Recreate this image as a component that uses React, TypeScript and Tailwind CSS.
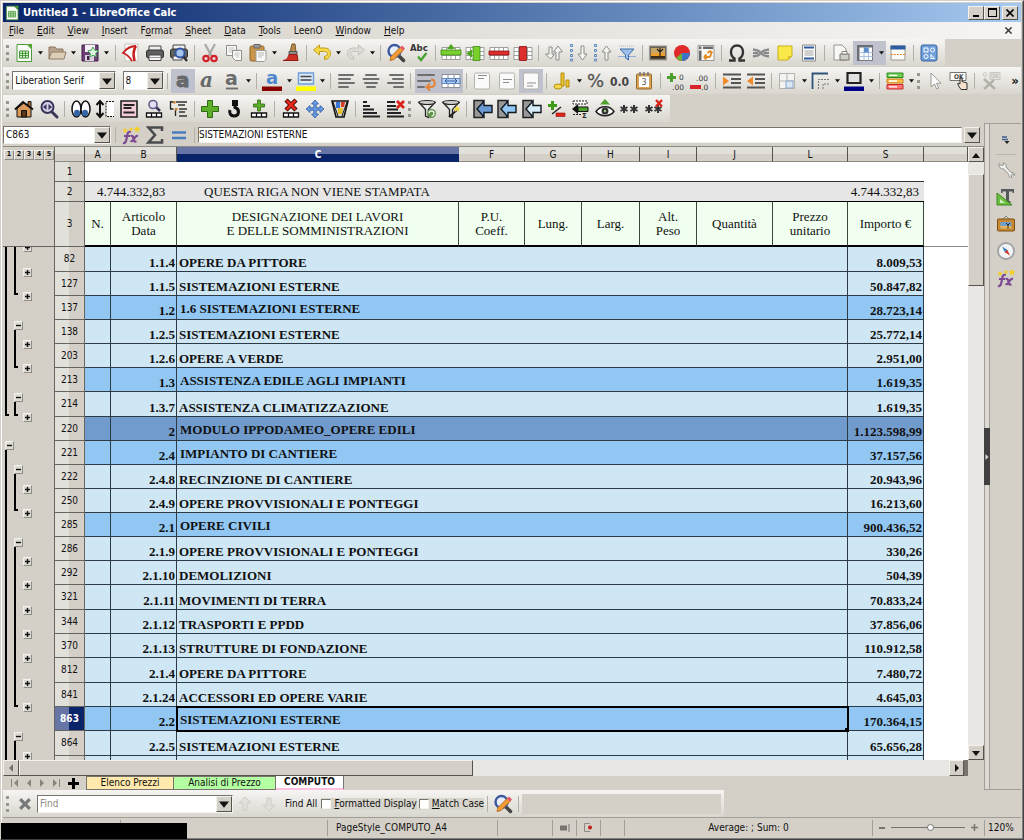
import { useState, type ReactNode } from 'react';
import clsx from 'clsx';

const bevel = 'bg-[#d4d0c8] border border-t-[#f4f2ee] border-l-[#f4f2ee] border-r-[#55534e] border-b-[#55534e]';
const sunken = 'border border-t-[#77746e] border-l-[#77746e] border-r-[#f4f2ee] border-b-[#f4f2ee]';

/* ---------- Icons (20 x 20 grid) ---------- */

const sheetRows = <path d="M1 4.5h18v12H1zM1 8.5h18M1 12.5h18M5.5 4.5v12M10 4.5v12M14.500 4.500v12" fill="#fff" stroke="#8a8a8a" strokeWidth=".8" />;
const gridStrip = <path d="M2.500 14h15v4h-15zM7.500 14v4M12.500 14v4" fill="#fff" stroke="#111" strokeWidth="1.300" />;
const redX = (
    <>
        <path d="M5 1l10 10M15 1L5 11" stroke="#3a0800" strokeWidth="4.500" />
        <path d="M5.500 1.500l9 9M14.500 1.500l-9 9" stroke="#e8261a" strokeWidth="2.600" />
    </>
);
const magnifier = (
    <>
        <path d="M12.500 12.500l5 5" stroke="#444" strokeWidth="3.500" strokeLinecap="round" />
        <circle cx="8.500" cy="8" r="6" fill="#e6ecf8" stroke="#3d5aa0" strokeWidth="2.400" />
    </>
);
const funnel = (
    <>
        <path d="M2 3.500l6.500 7v6.500l3 1.500v-8l6.500-7z" fill="#e8e8e4" stroke="#222" strokeWidth="1.300" />
        <ellipse cx="10" cy="3.500" rx="8" ry="2" fill="#cfcfca" stroke="#222" strokeWidth="1.200" />
    </>
);
const page = (y: number) => (
    <>
        <rect x="2.500" y="2" width="15" height="16" rx="1.500" fill="#fafafa" stroke="#b4b2ac" />
        <path d={`M6 ${y}h9M6 ${y + 3}h6`} stroke="#8f8f8f" />
    </>
);
const collapse = (fill: string) => (
    <>
        <path d="M1 1.500h9v17H1z" fill="#999" stroke="#222" strokeWidth="1.500" />
        <path d="M4 10l7-8v4.500h8v7h-8V18z" fill={fill} stroke="#101820" strokeWidth="1.400" />
    </>
);
const asterisk = (x: number) => (
    <path d={`M${x} 6v8M${x - 3.5} 8l7 4M${x + 3.5} 8l-7 4`} stroke="#333" strokeWidth="2" />
);
const lines = (d: string) => <path d={d} stroke="#6f6f6f" strokeWidth="2" strokeLinecap="round" />;

const icons: Record<string, ReactNode> = {
    new: (
        <>
            <path d="M3 1.500h10l4.500 4.500v12.500H3z" fill="#fcfdfb" stroke="#4c9a3a" />
            <path d="M13 1h5v5z" fill="#4ea62f" />
            <path d="M5.500 8h9v7h-9zM5.500 10.300h9M5.500 12.600h9M8.500 8v7M11.500 8v7" fill="#eaf7e4" stroke="#3f9432" />
        </>
    ),
    open: (
        <>
            <path d="M2 16V4h6l1.500 2H16v4" fill="#b8a48c" stroke="#8a7760" />
            <path d="M2 16l2.500-7H19l-2 7z" fill="#dccdb6" stroke="#8f7c64" />
        </>
    ),
    save: (
        <>
            <path d="M2 2h16v16H2z" fill="#6d3f75" stroke="#41204a" />
            <path d="M5 2h10v7H5z" fill="#f4f0f5" />
            <path d="M5 12h9v6H5z" fill="#d8d0da" />
            <path d="M7 13h2.500v4H7z" fill="#41204a" />
            <path d="M13 4l1.700 3.200 3.600.600-2.600 2.500.600 3.500-3.300-1.600-3.200 1.600.600-3.500L7.800 7.800l3.500-.6z" fill="#dff5df" stroke="#46a35c" />
        </>
    ),
    pdf: (
        <>
            <path d="M4 1h13v17H4z" fill="#fbfbfb" stroke="#c5c3be" />
            <path d="M15 3C10 3 5 6 2 10c3 1 6 3 9 8" fill="none" stroke="#c81c1c" strokeWidth="1.800" />
            <path d="M15 3c-3 4-3 9-1.500 15" fill="none" stroke="#c81c1c" strokeWidth="2.600" />
        </>
    ),
    print: (
        <>
            <path d="M4 3h12v5H4z" fill="#eee" stroke="#444" />
            <rect x="1.500" y="7" width="17" height="8" rx="2" fill="#5e605d" stroke="#2f302e" />
            <path d="M4 12h12v5.500H4z" fill="#f6f6f6" stroke="#444" />
            <path d="M5 14.500h10" stroke="#999" />
        </>
    ),
    preview: (
        <>
            <path d="M4 2h12v5H4z" fill="#eee" stroke="#444" />
            <rect x="1.500" y="6" width="17" height="9" rx="2" fill="#5e605d" stroke="#2f302e" />
            <path d="M4 13h9v4H4z" fill="#f6f6f6" stroke="#444" />
            <path d="M14 13l4 5" stroke="#333" strokeWidth="2.500" />
            <circle cx="11" cy="10" r="4.500" fill="#a8c4ea" stroke="#2f53a5" strokeWidth="1.800" />
        </>
    ),
    cut: (
        <>
            <path d="M5 1l6.500 12M15 1L8.500 13" stroke="#a9aaa8" strokeWidth="2.200" />
            <circle cx="6" cy="15.500" r="2.700" fill="none" stroke="#d2222a" strokeWidth="2.200" />
            <circle cx="14" cy="15.500" r="2.700" fill="none" stroke="#d2222a" strokeWidth="2.200" />
        </>
    ),
    copy: (
        <>
            <path d="M2.500 2.500h10v10h-10z" fill="#fafafa" stroke="#8e8e8a" />
            <path d="M4.500 5h6M4.500 7h6M4.500 9h4" stroke="#c2c2c0" />
            <path d="M8.500 7.500h9v10h-6l-3-3z" fill="#fafafa" stroke="#8e8e8a" />
            <path d="M10.500 10h5M10.500 12h5M12 14h3" stroke="#c2c2c0" />
        </>
    ),
    paste: (
        <>
            <rect x="2" y="3" width="14" height="15" rx="1.500" fill="#c9954a" stroke="#8d6325" />
            <path d="M6 1.500h6V5H6z" fill="#9c9c98" stroke="#666" />
            <path d="M8 7.500h10v9l-2 2H8z" fill="#fafafa" stroke="#9a9a96" />
            <path d="M10 10h6M10 12h6M10 14h4" stroke="#b8b8b6" />
        </>
    ),
    brush: (
        <>
            <path d="M11 1h3l1 8H9z" fill="#b98a4e" stroke="#7b5727" />
            <path d="M8 8.500h8v3H8z" fill="#8a8c89" stroke="#555" />
            <path d="M8 11.500h8l1 6H2c4-.5 5-3 6-6z" fill="#cf2f22" stroke="#8d1d14" />
        </>
    ),
    undo: <path d="M1.500 7l6-5v3h5c4 0 6 2.500 6 5.500s-2 5.500-6 6v-3.300c2 0 3-1 3-2.500s-1.200-2.200-3-2.200h-5v3.500z" fill="#f4d94a" stroke="#c09b15" />,
    redo: <path d="M18.500 7l-6-5v3h-5c-4 0-6 2.500-6 5.500s2 5.500 6 6v-3.300c-2 0-3-1-3-2.500s1.200-2.200 3-2.200h5v3.500z" fill="#dedcd6" stroke="#c4c1ba" />,
    findReplace: (
        <>
            {magnifier}
            <path d="M4 17.500l1-4L14.500 4l3 3L8 16.500z" fill="#f39b35" stroke="#a85c10" strokeWidth=".8" />
            <path d="M14 4.500L16 2.500l3 3-2 2z" fill="#e4566c" />
        </>
    ),
    spell: (
        <>
            <text x="0" y="8" fontSize="9.500" fontWeight="bold" fill="#333" fontFamily="DejaVu Sans Condensed, sans-serif">Abc</text>
            <path d="M8 13.500l3 3.500 5.500-7" fill="none" stroke="#4da436" strokeWidth="2.400" />
        </>
    ),
    rowInsert: <>{sheetRows}<path d="M0 7h20v5H0z" fill="#79cf2c" stroke="#3e8e17" strokeWidth=".8" /><path d="M10 1l4 5H6z" fill="#4ea61c" /></>,
    colInsert: <>{sheetRows}<path d="M8 3.500h7v14H8z" fill="#79cf2c" stroke="#3e8e17" strokeWidth=".8" /><path d="M1 10.500l6-4v8z" fill="#4ea61c" /></>,
    rowDelete: <>{sheetRows}<path d="M0 8h20v4H0z" fill="#dd2d2d" stroke="#8e1212" strokeWidth=".8" /></>,
    colDelete: <>{sheetRows}<path d="M6.500 3.500h7v14h-7z" fill="#dd2d2d" stroke="#8e1212" strokeWidth=".8" /></>,
    sort: <path d="M5 4h3v7h2.500L6.500 16l-5-5H5zM12 17V9H9.500L14 3l4.500 6H15v8z" fill="#f4f4f2" stroke="#8c8c88" />,
    sortAsc: (
        <>
            <path d="M12 3h3v8h3l-4.500 6L9 11h3z" fill="#f4f4f2" stroke="#8c8c88" />
            <path d="M1.500 1.500h2v2h-2zM1.500 6.500h2v2h-2zM1.500 11.500h2v2h-2zM1.500 16h2v2h-2z" fill="#dbe8f8" stroke="#5b86bf" />
        </>
    ),
    sortDesc: (
        <>
            <path d="M12 17h3V9h3l-4.500-6L9 9h3z" fill="#f4f4f2" stroke="#8c8c88" />
            <path d="M1.500 1.500h2v2h-2zM1.500 6.500h2v2h-2zM1.500 11.500h2v2h-2zM1.500 16h2v2h-2z" fill="#dbe8f8" stroke="#5b86bf" />
        </>
    ),
    autofilter: (
        <>
            <path d="M2 3h16" stroke="#b8b8b4" strokeDasharray="1 1" />
            <path d="M3 6h14l-5.500 6v5l-3-2v-3z" fill="#9cc0ea" stroke="#3a6cab" />
            <path d="M1 13.500h7M12 13.500h7" stroke="#8db0da" />
        </>
    ),
    image: (
        <>
            <path d="M1.500 3h17v14h-17z" fill="#6b6150" stroke="#9a9a96" strokeWidth="1.200" />
            <path d="M3 5h14v5H3z" fill="#c9a66a" />
            <path d="M3 10h14v3H3z" fill="#efa02c" />
            <path d="M3 13h14v2.500H3z" fill="#3a2d1c" />
            <path d="M12 14V9l-3-3M12 9l3-3M12 8V5" stroke="#2d2418" strokeWidth="1.200" fill="none" />
        </>
    ),
    chart: (
        <>
            <circle cx="10" cy="10" r="8" fill="#e02a2a" />
            <path d="M10 10h8a8 8 0 0 1-8 8z" fill="#3b74c4" />
            <path d="M10 10v8a8 8 0 0 1-6-3z" fill="#6bb53a" />
        </>
    ),
    pivot: (
        <>
            <path d="M2 2.500h16v15H2z" fill="#f8f8f6" stroke="#999" />
            <path d="M3 3.500h2.500V6H3zM7 3.500h10V6H7zM3 7.500h2.500v9.500H3z" fill="#66686a" />
            <path d="M14 8c2 0 1 6-1 6H8M14 8l-2.500 2M14 8l2.500 2M8 14l2.500-2.500M8 14l2.500 2.500" stroke="#e48b22" strokeWidth="1.800" fill="none" />
        </>
    ),
    omega: <path d="M2 17.500h5.500v-2C5 14 4 11.500 4 9c0-4 2.500-6.500 6-6.500S16 5 16 9c0 2.500-1 5-3.500 6.500v2H18" fill="none" stroke="#333" strokeWidth="2.400" />,
    link: (
        <>
            <path d="M2 6.500l5 1 3 2.500 3-2.500 5-1M2 13.500l5-1L10 10l3 2.500 5 1" fill="none" stroke="#8a8b8c" strokeWidth="2.400" />
            <path d="M2 10h5M13 10h5" stroke="#66686a" strokeWidth="1.400" />
        </>
    ),
    note: <><path d="M3 3h14v10l-4 4H3z" fill="#fbe94a" stroke="#c8ae1c" /><path d="M17 13h-4v4z" fill="#d9bf29" /></>,
    headers: (
        <>
            <path d="M3.500 2h13v16h-13z" fill="#fbfbfb" stroke="#8a8a86" />
            <path d="M5 4.500h10M5 15.500h10" stroke="#2f5ca0" strokeWidth="2" />
            <path d="M5.500 8h9M5.500 10h9M5.500 12h9" stroke="#a5a5a2" />
        </>
    ),
    pageBreak: (
        <>
            <path d="M3 2h8l4 4v11H3z" fill="#f7f7f5" stroke="#98968f" />
            <path d="M9 11h9v6H9z" fill="#cfcfca" stroke="#77756f" />
            <path d="M11 8.500h5V11h-5z" fill="#fff" stroke="#88867f" />
        </>
    ),
    freeze: (
        <>
            <path d="M2.500 2.500h15v15h-15z" fill="#fbfbfb" stroke="#77787a" />
            <path d="M2 2h16v2.500H2zM2 4h2.500v14H2z" fill="#6a6e75" />
            <path d="M4.500 9.500h13M4.500 13.500h13M9 4v13.500M13.500 4v13.500" stroke="#aac2e2" />
            <path d="M9 4.500h4.500v5H9z" fill="#5b8dcb" />
        </>
    ),
    split: (
        <>
            <path d="M3 3h14v14H3z" fill="#fbfbfb" stroke="#98968f" />
            <path d="M2.500 2.500h15v4h-15z" fill="#2f5ca0" />
            <path d="M3 11.500h14" stroke="#e48b22" strokeDasharray="2 1" />
        </>
    ),
    draw: (
        <>
            <rect x="2" y="2" width="16" height="16" rx="2" fill="#6f9fd8" stroke="#39659f" />
            <path d="M5 5h4v4H5zM12 11.500l3.500 4H12z" fill="none" stroke="#fff" />
            <circle cx="13.500" cy="7" r="2" fill="none" stroke="#fff" />
            <circle cx="7" cy="13.500" r="2" fill="none" stroke="#fff" />
        </>
    ),
    bold: <text x="3" y="16" fontSize="20" fontWeight="bold" fill="#66686b" stroke="#66686b" strokeWidth=".8" fontFamily="DejaVu Sans, sans-serif">a</text>,
    italic: <text x="3" y="16" fontSize="20" fontStyle="italic" fontWeight="bold" fill="#666869" fontFamily="DejaVu Serif, serif">a</text>,
    underline: <><text x="3" y="14" fontSize="19" fontWeight="bold" fill="#6a6c6d" fontFamily="DejaVu Sans, sans-serif">a</text><path d="M4 17.500h12" stroke="#6a6c6d" strokeWidth="1.800" /></>,
    fontColor: <><text x="4" y="13" fontSize="18" fontWeight="bold" fill="#4d86cc" fontFamily="DejaVu Sans, sans-serif">a</text><path d="M0 15.500h20v4.500H0z" fill="#860000" /></>,
    highlight: (
        <>
            <path d="M2.500 2h15v11h-15z" fill="#dceaf8" stroke="#6b9fd8" strokeWidth="1.400" />
            <path d="M4.500 5.500h11M4.500 9h11" stroke="#444" strokeWidth="1.300" />
            <path d="M0 15.500h20v4.500H0z" fill="#ffff00" />
        </>
    ),
    alignLeft: lines('M2 4h14M2 8h11M2 12h15M2 16h9'),
    alignCenter: lines('M5 4h10M2.500 8h15M4 12h12M6 16h8'),
    alignRight: lines('M5 4h13M8 8h10M3 12h15M9 16h9'),
    wrap: (
        <>
            {lines('M1 4h16M1 10h12M1 16h6')}
            <path d="M14 8.500c5 0 5 7.500 0 7.500h-3M13 12.500L9.500 16l3.500 3.500" fill="none" stroke="#e48235" strokeWidth="2" />
        </>
    ),
    merge: (
        <>
            <path d="M1 3.500h18v13H1zM7 3.500v13M13 3.500v13" fill="#fff" stroke="#8b8f98" />
            <path d="M1 7.500h18v5H1z" fill="#b8d0f0" stroke="#5a86c0" />
            <path d="M4 10h12M6 8l-2 2 2 2M14 8l2 2-2 2" stroke="#2b5ca8" fill="none" />
        </>
    ),
    alignTop: page(4.5),
    alignMiddle: page(8.5),
    alignBottom: page(12),
    currency: (
        <>
            <path d="M9 2h3v13H9z" fill="#edc52b" stroke="#b48d0d" />
            <path d="M14 9h3v7h-3z" fill="#edc52b" stroke="#b48d0d" />
            <ellipse cx="6" cy="15.500" rx="4" ry="2.500" fill="#f5d84b" stroke="#b48d0d" />
        </>
    ),
    percent: <text x="1" y="16" fontSize="18" fill="#555" stroke="#555" strokeWidth=".3" fontFamily="DejaVu Sans, sans-serif">%</text>,
    number: <text x="0" y="14.500" fontSize="12" fontWeight="bold" fill="#444" fontFamily="DejaVu Sans Condensed, sans-serif">0.0</text>,
    date: (
        <>
            <rect x="2.500" y="3" width="15" height="15" rx="1" fill="#d8a45a" stroke="#94682a" />
            <path d="M5 5.500h10V16H5z" fill="#fff" />
            <path d="M6 1v4M10 1v4M14 1v4" stroke="#777" strokeWidth="1.500" />
            <text x="7.500" y="14" fontSize="8" fill="#555" fontFamily="DejaVu Sans, sans-serif">3</text>
        </>
    ),
    addDecimal: (
        <>
            <path d="M5.500 2v9M1 6.500h9" stroke="#4aa02c" strokeWidth="3" />
            <text x="13" y="9" fontSize="7.500" fill="#333" fontFamily="DejaVu Sans, sans-serif">0</text>
            <text x="6" y="18.500" fontSize="7.500" fill="#333" fontFamily="DejaVu Sans, sans-serif">.00</text>
        </>
    ),
    delDecimal: (
        <>
            <path d="M0 14h11v4H0z" fill="#d8242a" />
            <text x="6" y="9.500" fontSize="7.500" fill="#333" fontFamily="DejaVu Sans, sans-serif">.00</text>
            <text x="11" y="18.500" fontSize="7.500" fill="#333" fontFamily="DejaVu Sans, sans-serif">.0</text>
        </>
    ),
    indent: <><path d="M1 3.500h18M9 8h10M9 12h10M1 16.500h18" stroke="#555" strokeWidth="1.800" /><path d="M1 5.500l6 4.500-6 4.500z" fill="#ef8a2c" /></>,
    outdent: <><path d="M1 3.500h18M9 8h10M9 12h10M1 16.500h18" stroke="#555" strokeWidth="1.800" /><path d="M7 5.500L1 10l6 4.500z" fill="#ef8a2c" /></>,
    borders: (
        <>
            <path d="M2.500 2.500h15v15h-15zM10 2.500v15M2.500 10h15" fill="#f4f4f2" stroke="#b4b2ac" />
            <path d="M9 10h7v7H9z" fill="#dbe6f4" stroke="#86a4c8" />
        </>
    ),
    borderStyle: (
        <>
            <path d="M1.500 18V2.500H17" fill="none" stroke="#2d5478" strokeWidth="1.800" />
            <path d="M7.500 18V8.500H19M12 18v-5h7" fill="none" stroke="#777" strokeDasharray="2 1" />
        </>
    ),
    borderColor: <><path d="M3.500 2h13v10h-13z" fill="#e2e2e0" stroke="#222" strokeWidth="2.200" /><path d="M0 15.500h20v4.500H0z" fill="#000086" /></>,
    condFormat: (
        <>
            <path d="M2 2h16v4.500H2z" fill="#6fd058" stroke="#2f8a1c" />
            <path d="M2 8h16v4H2z" fill="#ffc04a" stroke="#c87f13" />
            <path d="M2 13.500h16V18H2z" fill="#ff7676" stroke="#c42828" />
            <path d="M4 4.300h8M4 10h8M4 15.800h8" stroke="#fff" strokeWidth="1.300" />
        </>
    ),
    cursor: <path d="M6 2v14l3.500-3 2.200 5 2-1-2.200-4.700H16z" fill="#fdfdfd" stroke="#9a9a96" />,
    okButton: (
        <>
            <path d="M1 1.500h16v8H1z" fill="#fcfcfa" stroke="#77756f" />
            <text x="5" y="8" fontSize="6.500" fontWeight="bold" fill="#444" fontFamily="DejaVu Sans Condensed, sans-serif">OK</text>
            <path d="M11 7v6l-2-1v2l3 4.500h6V12l-5-1.500V7z" fill="#f4e2cc" stroke="#333" />
        </>
    ),
    design: (
        <>
            <path d="M9 1.500h10v7H9z" fill="#e4e2dd" stroke="#c9c6bf" />
            <text x="10" y="7" fontSize="6" fill="#b3b0aa" fontFamily="DejaVu Sans Condensed, sans-serif">OK</text>
            <circle cx="4" cy="3.500" r="1.800" fill="none" stroke="#c9c6bf" />
            <path d="M3 8l11 10M3 18L13 9" fill="none" stroke="#b3b0aa" strokeWidth="2.400" />
        </>
    ),
    home: (
        <>
            <path d="M14 2.500h3v6h-3z" fill="#b06a2c" stroke="#111" />
            <path d="M3 9.500v8.500h14V9.500L10 4z" fill="#d99a5b" stroke="#111" />
            <path d="M1 10.500L9 3l10 7.500" fill="none" stroke="#111" strokeWidth="2" />
            <path d="M7.500 11.500h5V18h-5z" fill="#5a3416" stroke="#111" />
        </>
    ),
    zoom: (
        <>
            <path d="M12.500 12.500l5.500 5.500" stroke="#3a3658" strokeWidth="3" strokeLinecap="round" />
            <circle cx="8.500" cy="8" r="6" fill="#d6d2e6" stroke="#38345c" strokeWidth="2" />
            <path d="M7.500 5v6L4 8zM9.500 5v6L13 8z" fill="#38345c" />
        </>
    ),
    eyes: (
        <>
            <ellipse cx="5.500" cy="10" rx="4.500" ry="8" fill="#fff" stroke="#111" strokeWidth="1.500" />
            <ellipse cx="14.500" cy="10" rx="4.500" ry="8" fill="#fff" stroke="#111" strokeWidth="1.500" />
            <ellipse cx="6" cy="14" rx="3" ry="3.200" fill="#3465a4" />
            <ellipse cx="14" cy="14" rx="3" ry="3.200" fill="#3465a4" />
        </>
    ),
    rowHeight: <><path d="M5 2v16M1.500 6L5 2l3.500 4M1.500 14L5 18l3.500-4" fill="none" stroke="#111" strokeWidth="2" /><path d="M19 2.500h-8v15h8" fill="#fff" stroke="#111" strokeDasharray="2 1" /></>,
    list: <><path d="M2 2h16v16H2z" fill="#f4cdd6" stroke="#222" strokeWidth="1.600" /><path d="M4.500 6h11M4.500 9h8M4.500 13.500h11" stroke="#222" strokeWidth="1.800" /></>,
    findRow: (
        <>
            {gridStrip}
            <path d="M12 8l4 4" stroke="#38345c" strokeWidth="2.500" />
            <circle cx="9" cy="5.500" r="4" fill="#e4e0f2" stroke="#625d8d" strokeWidth="1.600" />
        </>
    ),
    tree: (
        <>
            <path d="M2.500 2v8h3M7.500 10v7M2.500 3h3" fill="none" stroke="#222" strokeWidth="1.300" />
            <path d="M8 3h11M10 6h7M11 10h8M11 13h6M11 17h8" stroke="#333" strokeWidth="1.500" />
            <path d="M5 2h2.500v2.500H5zM7 9h2.500v2.500H7z" fill="#c87f30" />
        </>
    ),
    plus: <path d="M7.500 1.500h5v6h6v5h-6v6h-5v-6h-6v-5h6z" fill="#5dae2a" stroke="#2e6a10" />,
    hook: <><path d="M8 1h6v6H8z" fill="#111" /><path d="M11 6v2.500c5 1.500 4.500 8.500-1 8.500-3.500 0-5-3-4-6" fill="none" stroke="#111" strokeWidth="3" /></>,
    addRow: <>{gridStrip}<path d="M8.500 1h3v4h4v3h-4v4h-3V8h-4V5h4z" fill="#5dae2a" stroke="#2e6a10" strokeWidth=".8" /></>,
    delRow: <>{gridStrip}{redX}</>,
    move: <path d="M10 1l3.500 4h-2.300v3.800H15V6.500l4 3.500-4 3.500v-2.300h-3.800V15h2.300L10 19l-3.500-4h2.300v-3.800H5v2.300L1 10l4-3.500v2.300h3.800V5H6.500z" fill="#6b9be0" stroke="#2c5aa6" strokeWidth=".8" />,
    palette: (
        <>
            <path d="M2 2h16l-4 16H6z" fill="#d8d8d6" stroke="#111" strokeWidth="1.600" />
            <path d="M6 3h4v6H6z" fill="#3b74d4" />
            <path d="M11 3h4l-1 5h-3z" fill="#d83a2a" />
            <path d="M8 9h5l-1 6H8z" fill="#e4c32a" />
            <path d="M3 3l5 14M17 3l-5 14" stroke="#111" />
        </>
    ),
    triangle: <path d="M2 3h4M2 7h7M2 10.500h11M2 14h14M2 17.500h17" stroke="#222" strokeWidth="1.800" />,
    triangleX: <><path d="M1 3h8M1 7h9M1 10.500h11M1 14h14M1 17.500h17" stroke="#222" strokeWidth="1.800" /><path d="M11 2l7 7M18 2l-7 7" stroke="#d8241a" strokeWidth="2.800" /></>,
    filterRefresh: <>{funnel}<circle cx="14.500" cy="14.500" r="4.500" fill="#5e8f4a" /><path d="M12 14.500a2.500 2.500 0 1 1 2.500 2.500" fill="none" stroke="#e9f5e2" strokeWidth="1.300" /></>,
    filterWand: <>{funnel}<path d="M8 18l9-8" stroke="#222" strokeWidth="2" /><path d="M16 6l1 2.500 2.500.5-2 1.500.5 2.500-2.200-1.500L13.500 13l.8-2.500-1.800-1.600 2.500-.2z" fill="#f2dc3c" /></>,
    collapse1: collapse('#6b9ad4'),
    collapse2: collapse('#93c8f4'),
    collapse3: collapse('#d8ecf8'),
    plusMinus: <><path d="M6.500 2v9M2 6.500h9" stroke="#3f9a1c" strokeWidth="3" /><path d="M6 15l9-7" stroke="#222" strokeWidth="1.500" /><path d="M10 14h9v3.500h-9z" fill="#e0261c" stroke="#8a120c" strokeWidth=".6" /></>,
    insertLeft: <><path d="M3 2h14v3H3zM3 15.500h8" fill="#fff" stroke="#222" strokeDasharray="2 1" /><path d="M2 10l6-5v10z" fill="#111" /><path d="M8 8h10v4.500H8z" fill="#4da12c" stroke="#111" /><text x="12" y="19" fontSize="7" fontWeight="bold" fill="#222" fontFamily="DejaVu Sans, sans-serif">Σ</text></>,
    eye: (
        <>
            <path d="M10 0l5 5.500H5z" fill="#4da12c" />
            <path d="M1 12.500c4-6.500 14-6.500 18 0-4 5.500-14 5.500-18 0z" fill="#fff" stroke="#222" strokeWidth="1.500" />
            <circle cx="10" cy="12" r="3.500" fill="#333" />
            <circle cx="10" cy="12" r="1.200" fill="#9fce8c" />
        </>
    ),
    stars: <>{asterisk(5)}{asterisk(15)}</>,
    starsX: <>{asterisk(5)}{asterisk(14)}<path d="M12 1l6 6.500M18 1l-6 6.500" stroke="#d8241a" strokeWidth="2.400" /></>,
    fx: (
        <>
            <path d="M4 3l1 1.500 1.800.4-1.300 1.200.2 1.800L4 7l-1.600.8.200-1.800L1.300 4.900l1.700-.4zM10 2l.8 1.300 1.400.3-1 1 .2 1.500-1.400-.7-1.400.7.2-1.500-1-1 1.400-.3zM16 1l1.200 2 2.200.4-1.600 1.600.300 2.300-2.100-1-2.100 1 .300-2.300-1.600-1.600 2.200-.4z" fill="#f3cf2b" />
            <path d="M2 18c2 .5 3-1 3.500-4l1-5c.3-1.600 1.300-2.500 3.300-2M3 11h6M9.500 11c2-.8 2.500.6 3 3s1 3 3 2.300M17 11c-2-.4-3 1-4 3s-1.800 2.600-3.500 2" fill="none" stroke="#7d4b91" strokeWidth="2.200" />
        </>
    ),
    sum: <path d="M17 6V2.500H3.500l6.500 7.500-6.500 7.500H17V14" fill="none" stroke="#4a4c4d" strokeWidth="2.600" />,
    equals: <path d="M3 7.500h14M3 13h14" stroke="#4a7cc0" strokeWidth="2.600" />,
    close: <path d="M4 4l12 12M16 4L4 16" stroke="#77787a" strokeWidth="4" />,
    findUp: <path d="M10 3l6 6h-4v7H8V9H4z" fill="#e2e0da" stroke="#cfccc5" />,
    findDown: <path d="M10 17l6-6h-4V4H8v7H4z" fill="#e2e0da" stroke="#cfccc5" />,
    wrench: <path d="M3 3.500l2.500 2.200 2-.7L7.300 2.800C9.500 3 10.500 5 10 7l5 5.500c2-.5 4 1 3.500 3l-2-1.500-1.500 1.200.8 2.300c-2 .5-3.600-1.500-3.100-3.200L7.500 8.700C5 9.500 2.500 7 3 3.500z" fill="#f2f2f0" stroke="#8f8f8b" />,
    styles: <><path d="M5 2h13v4h-1.500V4.500H13V14h1.500v2h-6v-2H10V4.500H6.500V6H5z" fill="#55595c" /><path d="M1 6l15 12H1z" fill="#6cbf3f" stroke="#3d8820" /><path d="M4 12l5 4H4z" fill="#d6edc8" /></>,
    gallery: (
        <>
            <path d="M7 5l3-3 3 3" fill="none" stroke="#888" />
            <rect x="1.500" y="5" width="17" height="12" rx="1" fill="#c9872f" stroke="#7c4f12" />
            <path d="M4.500 8h11v6.500h-11z" fill="#6fa0d4" />
            <path d="M4.500 12h11v2.500h-11z" fill="#e8b44e" />
            <path d="M12 14.500V11l-2-2M12 11l2-2" stroke="#3a2a10" fill="none" />
        </>
    ),
    compass: (
        <>
            <circle cx="10" cy="10" r="8" fill="#f4f5f6" stroke="#a2a3a4" strokeWidth="1.800" />
            <path d="M6 5.500l5.500 3.500L9 11.500z" fill="#3f7fc8" />
            <path d="M14 14.500L8.800 11.200 11.300 8.800z" fill="#d83a2a" />
        </>
    ),
};

function Icon({ name, className = 'size-5' }: { name: string; className?: string }) {
    return (
        <svg className={clsx('shrink-0 overflow-visible', className)} viewBox="0 0 20 20" fill="none" aria-hidden="true">
            {icons[name]}
        </svg>
    );
}

function Triangle({ dir, className = 'size-2' }: { dir: 'up' | 'down' | 'left' | 'right'; className?: string }) {
    const d = { up: 'M0 7l4-5 4 5z', down: 'M0 2l4 5 4-5z', left: 'M6 0L2 4l4 4z', right: 'M2 0l4 4-4 4z' }[dir];
    return (
        <svg className={clsx('shrink-0', className)} viewBox="0 0 8 8" fill="currentColor" aria-hidden="true">
            <path d={d} />
        </svg>
    );
}

/* ---------- Toolbars ---------- */

function Grip() {
    return <span className="mr-[3px] h-4 w-[3px] shrink-0 border-l-[3px] border-dotted border-[#9a978f]" />;
}

function Separator() {
    return (
        <span className="flex w-[7px] shrink-0 justify-center">
            <span className="h-4 w-px bg-[#b3afa6]" />
        </span>
    );
}

// "|" separator, ":" grip, "v" drop-down arrow, "*" prefix marks a pressed button
function Tools({ items }: { items: string }) {
    return items.split(' ').map((item, i) => {
        if (item === '|') return <Separator key={i} />;
        if (item === ':') return <Grip key={i} />;
        const pressed = item.startsWith('*');
        const name = pressed ? item.slice(1) : item;
        if (name === 'v') {
            return (
                <button
                    key={i}
                    aria-label="More options"
                    className={clsx('flex h-6 w-[9px] shrink-0 items-center justify-center', pressed && 'bg-[#bfc1cc]')}
                >
                    <Triangle dir="down" className="size-[5px]" />
                </button>
            );
        }
        return (
            <button
                key={i}
                aria-label={name}
                aria-pressed={pressed || undefined}
                className={clsx('flex h-6 w-6 shrink-0 items-center justify-center', pressed && 'bg-[#bfc1cc]')}
            >
                <Icon name={name} />
            </button>
        );
    });
}

const bar = 'mb-px flex h-[27px] items-center justify-between bg-linear-to-b from-[#f6f5f3] to-[#d9d6ce] pl-[3px]';

function Combo({ label, value, className }: { label: string; value: string; className: string }) {
    return (
        <span className={clsx('relative flex h-[19px] shrink-0 bg-white', sunken, className)}>
            <select aria-label={label} className="w-full appearance-none bg-transparent pl-[2px] outline-none">
                <option>{value}</option>
            </select>
            <span className={clsx('pointer-events-none absolute inset-y-0 right-0 flex w-4 items-center justify-center', bevel)}>
                <Triangle dir="down" className="size-[10px]" />
            </span>
        </span>
    );
}

/* ---------- Sheet ---------- */

type Tone = 'light' | 'mid' | 'dark';

interface Row {
    n: number;
    code: string;
    text: string;
    amount: string;
    tone?: Tone;
    tall?: boolean;
}

const rows: Row[] = [
    { n: 82, code: '1.1.4', text: 'OPERE DA PITTORE', amount: '8.009,53', tall: true },
    { n: 127, code: '1.1.5', text: 'SISTEMAZIONI ESTERNE', amount: '50.847,82' },
    { n: 137, code: '1.2', text: '1.6 SISTEMAZIONI ESTERNE', amount: '28.723,14', tone: 'mid' },
    { n: 138, code: '1.2.5', text: 'SISTEMAZIONI ESTERNE', amount: '25.772,14' },
    { n: 203, code: '1.2.6', text: 'OPERE A VERDE', amount: '2.951,00' },
    { n: 213, code: '1.3', text: 'ASSISTENZA EDILE AGLI IMPIANTI', amount: '1.619,35', tone: 'mid' },
    { n: 214, code: '1.3.7', text: 'ASSISTENZA CLIMATIZZAZIONE', amount: '1.619,35', tall: true },
    { n: 220, code: '2', text: 'MODULO IPPODAMEO_OPERE EDILI', amount: '1.123.598,99', tone: 'dark' },
    { n: 221, code: '2.4', text: 'IMPIANTO DI CANTIERE', amount: '37.157,56', tone: 'mid' },
    { n: 222, code: '2.4.8', text: 'RECINZIONE DI CANTIERE', amount: '20.943,96' },
    { n: 250, code: '2.4.9', text: 'OPERE PROVVISIONALI E PONTEGGI', amount: '16.213,60' },
    { n: 285, code: '2.1', text: 'OPERE CIVILI', amount: '900.436,52', tone: 'mid' },
    { n: 286, code: '2.1.9', text: 'OPERE PROVVISIONALI E PONTEGGI', amount: '330,26' },
    { n: 292, code: '2.1.10', text: 'DEMOLIZIONI', amount: '504,39' },
    { n: 321, code: '2.1.11', text: 'MOVIMENTI DI TERRA', amount: '70.833,24', tall: true },
    { n: 344, code: '2.1.12', text: 'TRASPORTI E PPDD', amount: '37.856,06' },
    { n: 370, code: '2.1.13', text: 'STRUTTURE DI FONDAZIONE', amount: '110.912,58' },
    { n: 812, code: '2.1.4', text: 'OPERE DA PITTORE', amount: '7.480,72', tall: true },
    { n: 841, code: '2.1.24', text: 'ACCESSORI ED OPERE VARIE', amount: '4.645,03' },
    { n: 863, code: '2.2', text: 'SISTEMAZIONI ESTERNE', amount: '170.364,15', tone: 'mid' },
    { n: 864, code: '2.2.5', text: 'SISTEMAZIONI ESTERNE', amount: '65.656,28', tall: true },
];

// rows that have a collapsed group right below them
const collapsed = [82, 127, 138, 203, 214, 222, 250, 286, 292, 321, 344, 370, 812, 841, 864];

const tones: Record<Tone, string> = {
    light: 'bg-[#cfe6f4]',
    mid: 'bg-[#91c7f2]',
    dark: 'bg-[#719bcd]',
};

const uiFont = "font-['DejaVu_Sans_Condensed','DejaVu_Sans',sans-serif] text-[10px]";

function RowHead({ n, active }: { n?: number; active?: boolean }) {
    return (
        <th
            scope="row"
            className={clsx(
                'border-r border-b border-[#66645f] p-0 align-middle',
                uiFont,
                active
                    ? 'bg-[linear-gradient(to_right,#6675a5_50%,#0a246a_50%)] font-bold text-white'
                    : 'bg-[linear-gradient(to_right,#e2e0da_50%,#d4d0c8_50%)] font-normal',
            )}
        >
            {n}
        </th>
    );
}

function OutlineButton({ sign }: { sign: '+' | '-' }) {
    return (
        <button aria-label={sign === '+' ? 'Show details' : 'Hide details'} className="flex size-[9px] shrink-0 items-center justify-center border border-[#f4f2ee] border-r-[#8e8b84] border-b-[#8e8b84] bg-[#dedbd4]">
            <svg className="size-[5px]" viewBox="0 0 5 5" stroke="#111" strokeWidth="1.400" aria-hidden="true">
                <path d={sign === '+' ? 'M0 2.500h5M2.500 0v5' : 'M0 2.500h5'} />
            </svg>
        </button>
    );
}

// each entry: blank space above, whether a button opens the group, height of its bracket
function Brackets({ groups }: { groups: { gap: number; button?: boolean; line: number; open?: boolean }[] }) {
    return (
        <div className="flex w-[9px] flex-col">
            {groups.map((g, i) => (
                <div key={i} className="flex shrink-0 flex-col" style={{ paddingTop: g.gap }}>
                    {g.button && <OutlineButton sign="-" />}
                    <span className={clsx('w-1 border-l-2 border-black', !g.open && 'border-b-2')} style={{ height: g.line }} />
                </div>
            ))}
        </div>
    );
}

function Outline() {
    return (
        <div className="flex w-[51px] shrink-0 flex-col">
            <div className="flex h-[15px] items-center pl-px">
                {[1, 2, 3, 4, 5].map((n) => (
                    <button key={n} className="flex h-[10px] w-[10px] items-center justify-center border border-[#f4f2ee] border-r-[#8e8b84] border-b-[#8e8b84] text-[7px] leading-none font-bold">
                        {n}
                    </button>
                ))}
            </div>
            <div className="h-[85px] border-b border-[#66645f]" />
            <div className="flex min-h-0 flex-1 overflow-hidden pl-[2px]">
                <Brackets groups={[{ gap: 0, line: 169 }, { gap: 25, button: true, line: 320, open: true }]} />
                <Brackets
                    groups={[
                        { gap: 0, line: 48 },
                        { gap: 26, button: true, line: 38 },
                        { gap: 25, button: true, line: 14 },
                        { gap: 49, button: true, line: 37 },
                        { gap: 27, button: true, line: 160 },
                        { gap: 25, button: true, line: 40, open: true },
                    ]}
                />
                <div className="-mt-1 flex flex-col">
                    <OutlineButton sign="+" />
                    {rows.map((r) => (
                        <div key={r.n} className={clsx('flex shrink-0 items-end', r.tall ? 'h-[25px]' : 'h-6')}>
                            {collapsed.includes(r.n) && <OutlineButton sign="+" />}
                        </div>
                    ))}
                </div>
            </div>
        </div>
    );
}

function Sheet() {
    const head = 'border-r border-b-2 border-r-[#3c463c] border-b-black p-0 text-center align-middle font-normal';
    const letter = 'border-r border-b border-r-[#55534e] border-b-[#8e8b84] p-0 font-normal';
    return (
        <table className="w-full table-fixed border-separate border-spacing-0 border-l border-[#66645f] bg-white">
            <colgroup>
                <col className="w-[30px]" />
                <col className="w-[26px]" />
                <col className="w-[66px]" />
                <col className="w-[282px]" />
                <col className="w-[66px]" />
                <col className="w-[57px]" />
                <col className="w-[58px]" />
                <col className="w-[57px]" />
                <col className="w-[76px]" />
                <col className="w-[75px]" />
                <col className="w-[76px]" />
                <col />
            </colgroup>
            <thead>
                <tr className="h-[15px] bg-[linear-gradient(#e2e0da_50%,#d4d0c8_50%)] leading-[13px]">
                    <th className={letter} />
                    {['A', 'B', 'C', 'F', 'G', 'H', 'I', 'J', 'L', 'S', ''].map((c) => (
                        <th
                            key={c}
                            scope="col"
                            className={c === 'C' ? 'bg-[linear-gradient(#6675a5_45%,#0a246a_45%)] p-0 font-bold text-white' : letter}
                        >
                            {c}
                        </th>
                    ))}
                </tr>
            </thead>
            <tbody className="font-['Liberation_Serif',serif] text-[13px] leading-[14px]">
                <tr className="h-5">
                    <RowHead n={1} />
                    <td colSpan={10} className="border-b border-[#333] p-0" />
                    <td className="p-0" />
                </tr>
                <tr className="h-5">
                    <RowHead n={2} />
                    <td colSpan={2} className="border-b border-black bg-[#e6e6e6] p-0 text-center">4.744.332,83</td>
                    <td colSpan={7} className="border-b border-black bg-[#e6e6e6] p-0 pl-[27px]">QUESTA RIGA NON VIENE STAMPATA</td>
                    <td className="border-b border-black bg-[#e6e6e6] p-0 pr-[5px] text-right">4.744.332,83</td>
                    <td className="p-0" />
                </tr>
                <tr className="h-[45px] bg-[#f0fff0]">
                    <RowHead n={3} />
                    <td className={head}>N.</td>
                    <td className={head}>Articolo<br />Data</td>
                    <td className={head}>DESIGNAZIONE DEI LAVORI<br />E DELLE SOMMINISTRAZIONI</td>
                    <td className={head}>P.U.<br />Coeff.</td>
                    <td className={head}>Lung.</td>
                    <td className={head}>Larg.</td>
                    <td className={head}>Alt.<br />Peso</td>
                    <td className={head}>Quantità</td>
                    <td className={head}>Prezzo<br />unitario</td>
                    <td className={head}>Importo €</td>
                    <td className="border-b border-[#8e8b84] bg-white p-0" />
                </tr>
                {rows.map((r) => {
                    const cell = clsx('border-r border-b border-[#2c3a44] p-0 align-bottom', tones[r.tone ?? 'light']);
                    const active = r.n === 863;
                    return (
                        <tr key={r.n} className={clsx('font-bold', r.tall ? 'h-[25px]' : 'h-6')}>
                            <RowHead n={r.n} active={active} />
                            <td className={cell} />
                            <td className={clsx(cell, 'pr-px pb-px text-right')}>{r.code}</td>
                            <td
                                colSpan={7}
                                className={clsx(
                                    cell,
                                    r.tone ? 'pb-[3px] pl-[3px]' : 'pb-px pl-[2px]',
                                    active && 'relative outline-2 -outline-offset-1 outline-black',
                                )}
                            >
                                {r.text}
                                {active && <span className="absolute -right-[2px] -bottom-[2px] size-1 bg-black" />}
                            </td>
                            <td className={clsx(cell, 'pr-px pb-px text-right')}>{r.amount}</td>
                            <td className="p-0" />
                        </tr>
                    );
                })}
                <tr className="h-6">
                    <RowHead />
                    <td className="border-r border-[#2c3a44] bg-[#cfe6f4] p-0" />
                    <td className="border-r border-[#2c3a44] bg-[#cfe6f4] p-0" />
                    <td colSpan={7} className="border-r border-[#2c3a44] bg-[#cfe6f4] p-0" />
                    <td className="border-r border-[#2c3a44] bg-[#cfe6f4] p-0" />
                    <td className="p-0" />
                </tr>
            </tbody>
        </table>
    );
}

/* ---------- Window ---------- */

const menu = ['File', 'Edit', 'View', 'Insert', 'Format', 'Sheet', 'Data', 'Tools', 'LeenO', 'Window', 'Help'];
const accel: Record<string, number> = { Format: 1, LeenO: -1 };

function Accel({ text, at = 0 }: { text: string; at?: number }) {
    if (at < 0) return <>{text}</>;
    return <>{text.slice(0, at)}<u className="underline-offset-1">{text[at]}</u>{text.slice(at + 1)}</>;
}

export default function App() {
    const [formatted, setFormatted] = useState(false);
    const [matchCase, setMatchCase] = useState(false);
    const windowButton = clsx('flex h-[14px] w-4 items-center justify-center', bevel);
    const check = clsx('size-[10px] appearance-none bg-white checked:bg-black', sunken);

    return (
        <div className="relative flex h-screen min-h-[400px] flex-col overflow-hidden border border-[#d4d0c8] border-r-[#404040] border-b-[#404040] bg-[#d4d0c8] font-['DejaVu_Sans_Condensed','DejaVu_Sans',sans-serif] text-[10px] leading-3 whitespace-nowrap text-[#111]">
            <div className="flex min-h-0 flex-1 flex-col border border-white border-r-[#808080] border-b-[#808080] p-px">
                {/* Title bar */}
                <header className="flex h-[19px] shrink-0 items-center bg-linear-to-r from-[#0a246a] to-[#a6caf0] pr-[3px] pl-px text-white">
                    <Icon name="new" className="size-4" />
                    <h1 className="ml-[3px] flex-1 text-[11px] font-bold">Untitled 1 - LibreOffice Calc</h1>
                    <button aria-label="Minimize" className={windowButton}>
                        <span className="mt-1.5 h-0.5 w-1.5 bg-black" />
                    </button>
                    <button aria-label="Maximize" className={windowButton}>
                        <span className="h-[9px] w-[9px] border border-t-2 border-black" />
                    </button>
                    <button aria-label="Close" className={clsx('ml-[2px]', windowButton)}>
                        <svg className="size-2" viewBox="0 0 8 8" stroke="#000" strokeWidth="1.600"><path d="M.5.5l7 7M7.500.5l-7 7" /></svg>
                    </button>
                </header>

                {/* Menu bar */}
                <nav className="flex h-[17px] shrink-0 items-center gap-[13px] bg-linear-to-r from-[#d4d0c8] to-[#f6f5f3] pr-[9px] pl-[6px]">
                    {menu.map((m) => (
                        <button key={m}><Accel text={m} at={accel[m]} /></button>
                    ))}
                    <button aria-label="Close document" className="ml-auto">
                        <svg className="size-[7px]" viewBox="0 0 8 8" stroke="#333" strokeWidth="1.600"><path d="M.5.5l7 7M7.500.5l-7 7" /></svg>
                    </button>
                </nav>

                {/* Toolbars */}
                <div className={clsx(bar, 'w-[942px] max-w-full shrink-0 pr-[4px]')}>
                    <Tools items=": new v open v save v | pdf print preview | cut copy paste v brush | undo v redo v | findReplace spell | rowInsert colInsert rowDelete colDelete | sort sortAsc sortDesc autofilter | image chart pivot | omega link note headers | pageBreak *freeze *v split | draw" />
                </div>
                <div className={clsx(bar, 'shrink-0 pr-[2px]')}>
                    <Grip />
                    <Combo label="Font name" value="Liberation Serif" className="w-[104px]" />
                    <Combo label="Font size" value="8" className="ml-[6px] w-[41px]" />
                    <Tools items="| *bold italic underline v | fontColor v highlight v | alignLeft alignCenter alignRight | *wrap *merge | alignTop alignMiddle *alignBottom | currency v percent number date | addDecimal delDecimal | indent outdent | borders v borderStyle v borderColor v | condFormat v : cursor okButton | design" />
                    <button aria-label="More" className="ml-[3px] w-[13px] text-right text-[13px] font-bold">»</button>
                </div>
                <div className={clsx(bar, 'w-[667px] max-w-full shrink-0 pr-[4px]')}>
                    <Tools items=": home zoom | eyes rowHeight list findRow tree | plus hook addRow | delRow move palette | triangle triangleX : filterRefresh filterWand | collapse1 collapse2 collapse3 plusMinus insertLeft eye stars starsX" />
                </div>

                <main className="flex min-h-0 flex-1">
                    <div className="flex min-w-0 flex-1 flex-col">
                        {/* Formula bar */}
                        <div className="flex h-[23px] shrink-0 items-center pr-1">
                            <span className={clsx('flex h-[18px] w-[108px] bg-white', sunken)}>
                                <input aria-label="Name box" defaultValue="C863" className="min-w-0 flex-1 pl-[2px] outline-none" />
                                <button aria-label="Choose range" className={clsx('flex w-4 items-center justify-center', bevel)}>
                                    <Triangle dir="down" className="size-[10px]" />
                                </button>
                            </span>
                            <span className="ml-px flex items-center">
                                <Separator />
                                <Tools items="fx sum equals" />
                                <Separator />
                            </span>
                            <input aria-label="Input line" defaultValue="SISTEMAZIONI ESTERNE" className={clsx('h-4 min-w-0 flex-1 bg-white outline-none', sunken)} />
                            <button aria-label="Expand formula bar" className={clsx('ml-[2px] flex size-4 items-center justify-center', bevel)}>
                                <Triangle dir="down" className="size-[10px]" />
                            </button>
                        </div>

                        {/* Grid */}
                        <div className="flex min-h-0 flex-1 border-t border-[#8e8b84]">
                            <Outline />
                            <div className="min-w-0 flex-1 overflow-hidden">
                                <Sheet />
                            </div>
                            <div className="flex w-4 shrink-0 flex-col bg-[#e8e7e3]">
                                <button aria-label="Scroll up" className={clsx('flex h-[15px] items-center justify-center', bevel)}><Triangle dir="up" /></button>
                                <div className={clsx('mt-3 h-28', bevel)} />
                                <button aria-label="Scroll down" className={clsx('mt-auto flex h-[15px] items-center justify-center', bevel)}><Triangle dir="down" /></button>
                            </div>
                        </div>
                        <div className="mr-4 flex h-4 shrink-0 bg-[#e8e7e3]">
                            <button aria-label="Scroll left" className={clsx('flex w-4 items-center justify-center text-[#77746e]', bevel)}><Triangle dir="left" /></button>
                            <div className={clsx('w-[454px]', bevel)} />
                            <button aria-label="Scroll right" className={clsx('ml-auto flex w-[15px] items-center justify-center', bevel)}><Triangle dir="right" /></button>
                            <span className="w-1 bg-[#77746e]" />
                        </div>

                        {/* Sheet tabs */}
                        <div className="flex h-[14px] shrink-0 items-stretch pl-[8px]">
                            <span className="mr-px flex items-center gap-[5px] text-[#88857e]">
                                <button aria-label="First sheet" className="flex"><span className="h-2 w-px bg-current" /><Triangle dir="left" /></button>
                                <button aria-label="Previous sheet"><Triangle dir="left" /></button>
                                <button aria-label="Next sheet"><Triangle dir="right" /></button>
                                <button aria-label="Last sheet" className="flex"><Triangle dir="right" /><span className="h-2 w-px bg-current" /></button>
                            </span>
                            <button aria-label="Add sheet" className="mx-[7px] flex items-center">
                                <svg className="size-[11px]" viewBox="0 0 11 11" stroke="#000" strokeWidth="3"><path d="M5.500 0v11M0 5.500h11" /></svg>
                            </button>
                            <button className="w-[88px] border border-[#77746e] bg-[#ffe9ac]">Elenco Prezzi</button>
                            <button className="w-[102px] border border-l-0 border-[#77746e] bg-[#b4ffa2]">Analisi di Prezzo</button>
                            <button className="w-[68px] border-r border-b-2 border-r-[#77746e] border-b-[#ffbfe0] bg-white font-bold">COMPUTO</button>
                        </div>
                    </div>

                    {/* Sidebar */}
                    <aside className="flex w-[37px] shrink-0 border-t border-b border-[#a19e97]">
                        <button aria-label="Hide sidebar" className="flex w-[6px] flex-col justify-center border-x border-[#a19e97] bg-[#dedbd4]">
                            <span className="-mx-px flex h-[57px] items-center justify-center bg-[#404040] text-[#dedbd4]">
                                <Triangle dir="right" className="size-[6px]" />
                            </span>
                        </button>
                        <div className="flex flex-1 flex-col items-center gap-[3px] pt-[3px]">
                            <button aria-label="Sidebar settings" className="flex size-6 items-center justify-center">
                                <svg className="size-[9px]" viewBox="0 0 9 9" aria-hidden="true">
                                    <path d="M1 2h5M1 4.500h6" stroke="#3f5f8c" strokeWidth="1.300" />
                                    <path d="M3.500 6h5L6 9z" fill="#222" />
                                </svg>
                            </button>
                            <span className="h-px w-5 bg-[#bab6ad]" />
                            <Tools items="wrench styles gallery compass fx" />
                        </div>
                    </aside>
                </main>

                {/* Find bar */}
                <div className="flex h-[27px] w-[721px] max-w-full shrink-0 items-center bg-linear-to-b from-[#f6f5f3] to-[#d9d6ce] pr-[3px] pl-[3px]">
                    <Grip />
                    <button aria-label="Close find bar" className="flex w-[25px] justify-center"><Icon name="close" className="size-4" /></button>
                    <span className={clsx('flex h-[18px] w-[196px] bg-white', sunken)}>
                        <input aria-label="Find" placeholder="Find" className="min-w-0 flex-1 pl-[2px] outline-none placeholder:text-[#8e8b84]" />
                        <button aria-label="Search history" className={clsx('flex w-4 items-center justify-center', bevel)}>
                            <Triangle dir="down" className="size-[10px]" />
                        </button>
                    </span>
                    <Tools items="findUp findDown" />
                    <button className="ml-1">Find All</button>
                    <label className="ml-1 flex items-center gap-[3px] bg-[#d8d5cd]">
                        <input type="checkbox" checked={formatted} onChange={(e) => setFormatted(e.target.checked)} className={check} />
                        <span><Accel text="Formatted Display" /></span>
                    </label>
                    <label className="ml-[2px] flex items-center gap-[3px] bg-[#d8d5cd]">
                        <input type="checkbox" checked={matchCase} onChange={(e) => setMatchCase(e.target.checked)} className={check} />
                        <span><Accel text="Match Case" /></span>
                    </label>
                    <Separator />
                    <Tools items="findReplace |" />
                    <span className="h-5 flex-1 bg-[#d4d0c8]" />
                </div>

                {/* Status bar */}
                <footer className="flex h-5 shrink-0 items-center border-t border-[#a19e97]">
                    <span className="h-4 w-[118px] border-r border-[#a19e97]" />
                    <span className="h-4 w-[207px] border-r border-[#a19e97]" />
                    <span className="flex h-4 w-[170px] items-center border-r border-[#a19e97] pl-2">PageStyle_COMPUTO_A4</span>
                    <span className="h-4 w-[55px] border-r border-[#a19e97]" />
                    <span className="flex h-4 w-6 items-center justify-center border-r border-[#a19e97]">
                        <svg className="h-2 w-[10px]" viewBox="0 0 10 8"><path d="M0 1.500h7v5H0z" fill="#77746e" /><path d="M9 0v8" stroke="#77746e" /></svg>
                    </span>
                    <span className="flex h-4 w-6 items-center justify-center border-r border-[#a19e97]">
                        <svg className="size-[9px]" viewBox="0 0 9 9"><path d="M6 .5H.5v8H6" fill="none" stroke="#8e8b84" /><circle cx="6" cy="4.500" r="2" fill="#c41c1c" /></svg>
                    </span>
                    <span className="h-4 w-6 border-r border-[#a19e97]" />
                    <span className="flex h-4 flex-1 items-center justify-center border-r border-[#a19e97]">Average: ; Sum: 0</span>
                    <span className="flex h-4 w-[112px] items-center gap-[6px] border-r border-[#a19e97] px-[6px] text-[#77746e]">
                        <button aria-label="Zoom out" className="h-0.5 w-[6px] bg-current" />
                        <input
                            type="range"
                            aria-label="Zoom"
                            min={0}
                            max={100}
                            defaultValue={54}
                            className="h-px min-w-0 flex-1 appearance-none bg-[#77746e] [&::-webkit-slider-thumb]:size-[7px] [&::-webkit-slider-thumb]:appearance-none [&::-webkit-slider-thumb]:rounded-sm [&::-webkit-slider-thumb]:border [&::-webkit-slider-thumb]:border-[#77746e] [&::-webkit-slider-thumb]:bg-white"
                        />
                        <button aria-label="Zoom in">
                            <svg className="size-[7px]" viewBox="0 0 7 7" stroke="currentColor" strokeWidth="1.500"><path d="M3.500 0v7M0 3.500h7" /></svg>
                        </button>
                    </span>
                    <span className="w-[36px] pl-[3px]">120%</span>
                </footer>
            </div>
            <div className="absolute bottom-0 left-0 h-4 w-[186px] bg-black" />
        </div>
    );
}
